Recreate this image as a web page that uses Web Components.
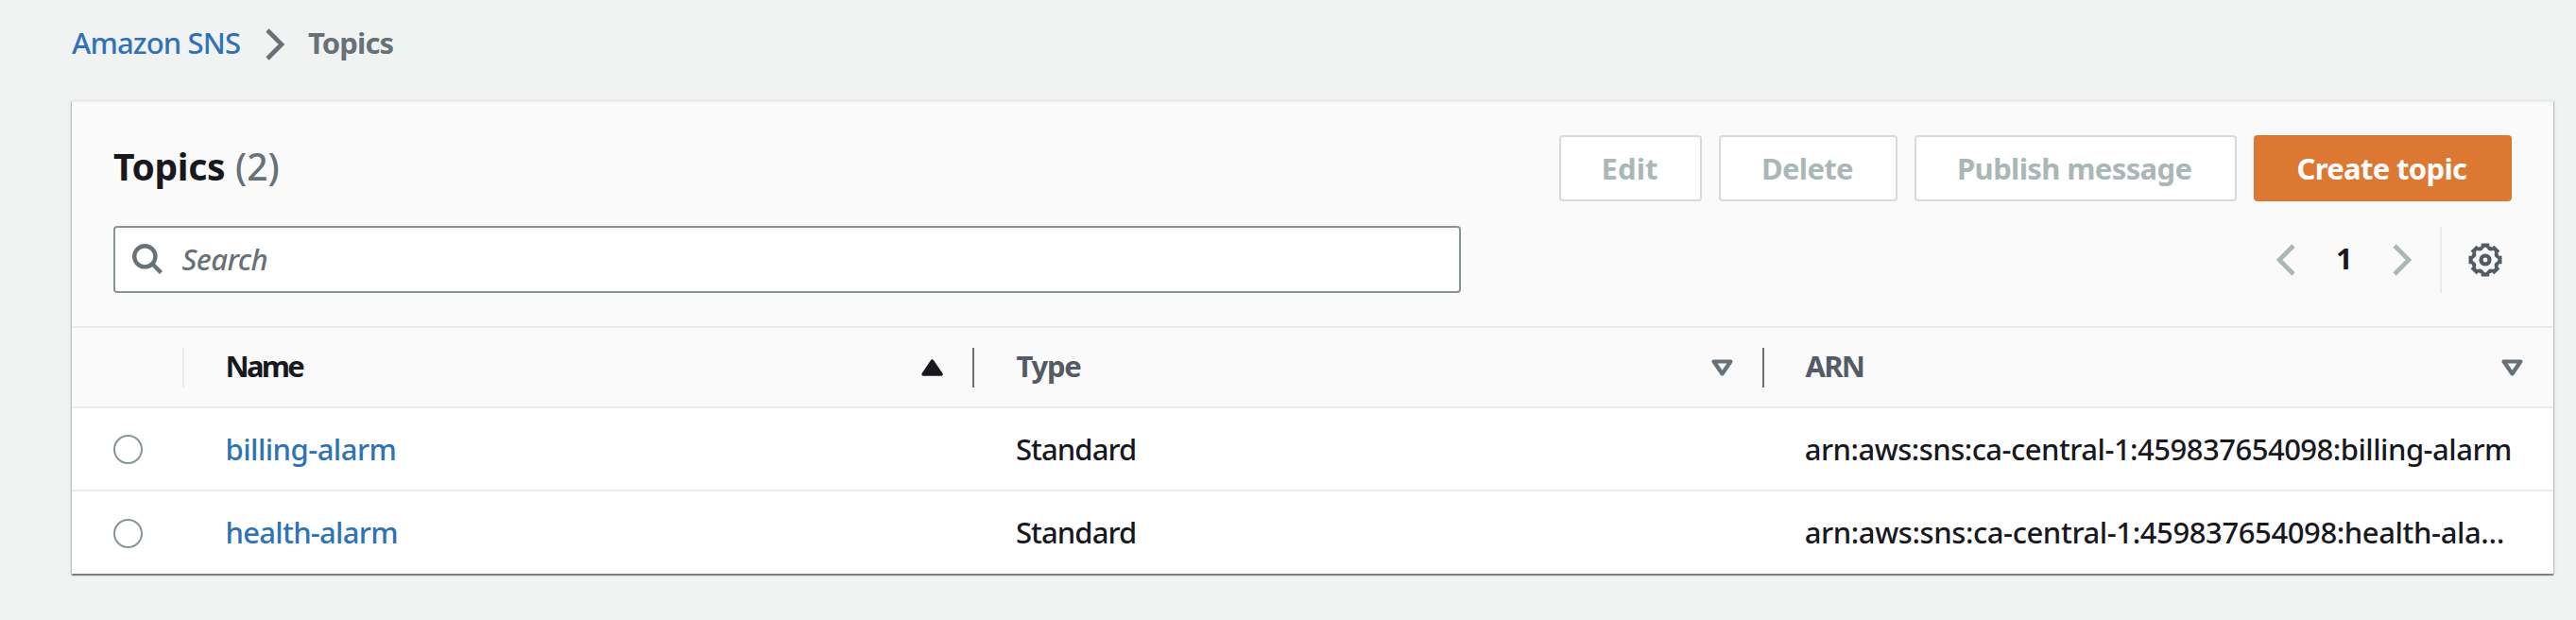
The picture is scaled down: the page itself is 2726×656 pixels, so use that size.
<!DOCTYPE html>
<html lang="en">
<head>
<meta charset="utf-8">
<title>Topics</title>
<style>
html,body{margin:0;padding:0;background:#f1f3f3}
body{font:400 31px/44px "Noto Sans","Open Sans",sans-serif;color:#17191f;height:656px;overflow:hidden}
</style>
</head>
<body>
<sns-app></sns-app>
<script>
const define = (name, html, setup) => customElements.define(name, class extends HTMLElement {
  connectedCallback() {
    const t = document.createElement('template');
    t.innerHTML = html;
    this.attachShadow({mode: 'open'}).append(t.content.cloneNode(true));
    if (setup) setup(this, this.shadowRoot);
  }
});

// A run of text tracked so that its visible glyphs span exactly `w` pixels.
define('fit-text', `<style>
:host{display:block;white-space:nowrap;flex:none;font-weight:500}
:host([bold]){font-weight:700}
:host([big]){font-size:39px}
:host([italic]){font-style:italic}
span{display:block;width:max-content}
</style><span><slot></slot></span>`, (el, root) => {
  const cs = getComputedStyle(el), text = el.textContent, w = +el.getAttribute('w');
  const c = document.createElement('canvas').getContext('2d');
  c.font = `${cs.fontStyle} ${cs.fontWeight} ${cs.fontSize} ${cs.fontFamily}`;
  const m = c.measureText(text);
  const ink = m.actualBoundingBoxLeft + m.actualBoundingBoxRight;
  el.style.width = w + 'px';
  const s = root.querySelector('span');
  s.style.marginLeft = m.actualBoundingBoxLeft + 'px';
  if (text.length > 1) s.style.letterSpacing = (w - ink) / (text.length - 1) + 'px';
});

// Eight-toothed rim: a toothed outer outline with a star-shaped opening.
const ring = points => {
  let d = '';
  for (let i = 0; i < 8; i++) for (const [r, a] of points) {
    const t = (i * 45 + a - 90) * Math.PI / 180;
    d += (d ? 'L' : 'M') + (18 + r * Math.cos(t)).toFixed(2) + ' ' + (18 + r * Math.sin(t)).toFixed(2);
  }
  return d + 'Z';
};
const gear = ring([[15.2, -16.5], [18, -13.5], [18, 13.5], [15.2, 16.5]]) + ring([[13.3, -4], [13.3, 4], [10.9, 17], [10.9, 28]]);
const icons = {
  right: [20, 34, '<path d="M2 2 17 17 2 32" fill="none" stroke="currentColor" stroke-width="4.6"/>'],
  left: [20, 34, '<path d="M18 2 3 17 18 32" fill="none" stroke="currentColor" stroke-width="4.6"/>'],
  search: [32, 32, '<circle cx="13.3" cy="13.3" r="11.1" fill="none" stroke="currentColor" stroke-width="4.4"/><path d="M21 21 30.5 30.5" stroke="currentColor" stroke-width="4.4"/>'],
  gear: [36, 36, `<path d="${gear}" fill="currentColor" fill-rule="evenodd"/><circle cx="18" cy="18" r="4.5" fill="none" stroke="currentColor" stroke-width="4.2"/>`],
  asc: [23, 18, '<path d="M11.5 2 21 16H2Z" fill="currentColor" stroke="currentColor" stroke-width="3.4" stroke-linejoin="round"/>'],
  sort: [23, 18, '<path d="M11.5 15.5 2.6 2.5H20.4Z" fill="none" stroke="currentColor" stroke-width="4.2" stroke-linejoin="round"/>']
};
define('ui-icon', '<style>:host{display:block;flex:none}svg{display:block}</style>', (el, root) => {
  const [w, h, body] = icons[el.getAttribute('name')];
  const t = document.createElement('template');
  t.innerHTML = `<svg width="${w}" height="${h}" viewBox="0 0 ${w} ${h}">${body}</svg>`;
  root.append(t.content);
});

define('ui-button', `<style>
:host{display:flex;box-sizing:border-box;height:70px;padding:0 45px 1px;border:2px solid #d5dbdb;border-radius:4px;background:#fff;color:#aab7b7;align-items:center}
:host([primary]){background:#dd7832;border-color:#dd7832;color:#fff}
</style><slot></slot>`);

define('bread-crumbs', `<style>
:host{display:flex;align-items:center;height:62px;padding:28px 0 0 76px;box-sizing:border-box;color:#687078}
a{color:#2e72b8}
ui-icon{margin:3px 25.5px 0 26.5px}
</style>
<a><fit-text w="178">Amazon SNS</fit-text></a><ui-icon name="right"></ui-icon><fit-text bold w="90.5">Topics</fit-text>`);

define('search-box', `<style>
:host{display:flex;box-sizing:border-box;width:1426px;height:71px;border:2px solid #879594;border-radius:4px;background:#fff;align-items:center;padding:0 0 1px 18px;gap:20.5px;color:#687078}
</style><ui-icon name="search"></ui-icon><fit-text italic w="90">Search</fit-text>`);

define('page-nav', `<style>
:host{display:flex;align-items:center;height:70px;color:#aab7b7;padding-right:10px}
fit-text{color:#17191f;margin:0 48px 3px 44.5px}
i{width:2px;height:70px;background:#eaebeb;margin:0 28px 0 30px}
ui-icon[name=gear]{color:#545b64}
</style><ui-icon name="left"></ui-icon><fit-text bold w="11">1</fit-text><ui-icon name="right"></ui-icon><i></i><ui-icon name="gear"></ui-icon>`);

define('panel-header', `<style>
:host{display:flex;flex-direction:column;height:237px;padding:35px 44px 0;box-sizing:border-box;background:#fafafa}
div{display:flex;align-items:center}
.top{height:70px;gap:18px}
.title{flex:1;gap:13px;padding-bottom:4px}
.count{color:#687078}
.tools{margin-top:26px;justify-content:space-between}
</style>
<div class="top"><div class="title"><fit-text big bold w="117">Topics</fit-text><fit-text big class="count" w="44.5">(2)</fit-text></div>
<ui-button><fit-text bold w="57.5">Edit</fit-text></ui-button><ui-button><fit-text bold w="95">Delete</fit-text></ui-button><ui-button><fit-text bold w="246.5">Publish message</fit-text></ui-button><ui-button primary><fit-text bold w="179.5">Create topic</fit-text></ui-button></div>
<div class="tools"><search-box></search-box><page-nav></page-nav></div>`);

define('table-head', `<style>
:host{display:grid;grid-template-columns:119px 836px 836px 1fr;height:87px;box-sizing:border-box;border:solid #eaebeb;border-width:2px 0;background:#fafafa;color:#545b64}
div{display:flex;align-items:center;justify-content:space-between;padding:0 32px 0 44.5px}
.s{padding:0;justify-content:flex-end}
.n{padding-left:45.5px}
.l{padding-left:43.5px}
fit-text{margin-bottom:3px}
i{width:2px;height:42px;background:#eaebeb}
i.d{background:#687078;margin:1px 0 0 31px}
span{flex:1}
.n{color:#17191f}
.c{padding-right:0}
.c ui-icon,.l ui-icon{color:#687078}
.n ui-icon{color:#17191f}
</style>
<div class="s"><i></i></div>
<div class="c n"><fit-text bold w="81.7">Name</fit-text><span></span><ui-icon name="asc"></ui-icon><i class="d"></i></div>
<div class="c"><fit-text bold w="68.7">Type</fit-text><span></span><ui-icon name="sort"></ui-icon><i class="d"></i></div>
<div class="l"><fit-text bold w="61.3">ARN</fit-text><ui-icon name="sort"></ui-icon></div>`);

define('topic-row', `<style>
:host{display:grid;grid-template-columns:164.5px 835.5px 834.7px 1fr;height:88px;align-items:center;background:#fff;box-sizing:border-box;border-bottom:2px solid #eaebeb}
:host(:last-of-type){border:0;height:87px}
i{box-sizing:border-box;width:31px;height:31px;border:2px solid #879594;border-radius:50%;margin:1px 0 0 44px}
a{color:#2e72b8}
::slotted(*){margin-bottom:1px}
</style><i></i><a><slot name="name"></slot></a><slot name="type"></slot><slot name="arn"></slot>`);

define('sns-panel', `<style>
:host{display:block;margin:44px 24px 0 76px;width:2626px;border-top:2px solid #ebecec;background:#fff;box-shadow:0 2px 1px 0 rgba(0,28,36,.38),1px 1px 2px 0 rgba(0,28,36,.22),-1px 1px 2px 0 rgba(0,28,36,.22)}
</style><slot></slot>`);

define('sns-app', `<style>:host{display:block}</style>
<bread-crumbs></bread-crumbs>
<sns-panel>
<panel-header></panel-header>
<table-head></table-head>
<topic-row><fit-text slot="name" w="177">billing-alarm</fit-text><fit-text slot="type" w="125">Standard</fit-text><fit-text slot="arn" w="745.3">arn:aws:sns:ca-central-1:459837654098:billing-alarm</fit-text></topic-row>
<topic-row><fit-text slot="name" w="178.7">health-alarm</fit-text><fit-text slot="type" w="125">Standard</fit-text><fit-text slot="arn" w="737.6">arn:aws:sns:ca-central-1:459837654098:health-ala…</fit-text></topic-row>
</sns-panel>`);
</script>
</body>
</html>
